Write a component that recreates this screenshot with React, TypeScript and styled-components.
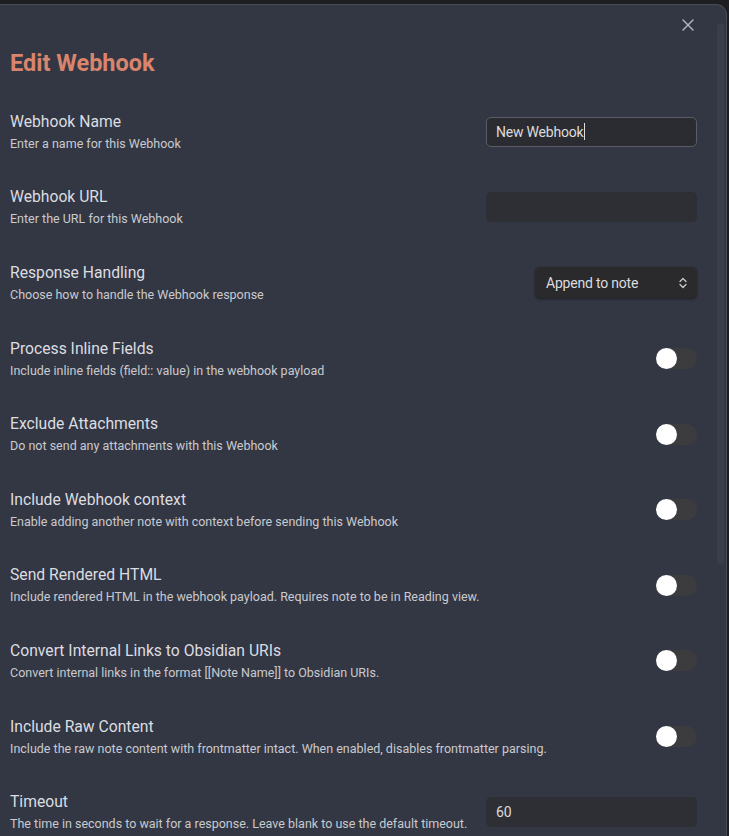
import React from "react";
import styled, { createGlobalStyle } from "styled-components";

const GlobalStyle = createGlobalStyle`
  html, body {
    margin: 0;
    padding: 0;
    background-color: #1d1e22;
    overflow: hidden;
  }
  body {
    font-family: Roboto, "Liberation Sans", sans-serif;
  }
`;

const Page = styled.div`
  height: 836px;
  padding-top: 4px;
  box-sizing: border-box;
  overflow: hidden;
`;

const Modal = styled.div`
  position: relative;
  width: 727px;
  height: 100%;
  overflow: hidden;
  box-sizing: border-box;
  background-color: #333743;
  border-top: 1px solid #474a54;
  border-right: 1px solid #474a54;
  border-top-right-radius: 11px;
  padding: 0 29px 0 10px;
`;

const Scrollbar = styled.div`
  position: absolute;
  top: 18px;
  right: 2px;
  width: 7px;
  height: 542px;
  border-radius: 4px;
  background-color: #3b3e49;
`;

const Header = styled.div`
  height: 89px;
  display: flex;
  flex-direction: column;
`;

const CloseRow = styled.div`
  display: flex;
  justify-content: flex-end;
  padding-top: 13px;
  margin-right: 2px;
`;

const CloseButton = styled.button`
  width: 14px;
  height: 14px;
  padding: 0;
  border: none;
  background: none;
  color: #b9bac0;
  display: flex;
  align-items: center;
  justify-content: center;
`;

const Title = styled.h1`
  margin: 17px 0 0;
  font-size: 23.5px;
  font-weight: 700;
  color: #d9846c;
`;

const Row = styled.div`
  height: 75.6px;
  display: flex;
  align-items: center;
  justify-content: space-between;
  gap: 16px;
`;

const Info = styled.div`
  display: flex;
  flex-direction: column;
  gap: 4px;
`;

const Name = styled.div`
  font-size: 15.7px;
  line-height: 20px;
  color: #dcdde1;
`;

const Description = styled.div`
  font-size: 12.5px;
  line-height: 16px;
  color: #c9cacf;
`;

const TextInput = styled.div<{ $focused?: boolean }>`
  width: 211px;
  height: 30px;
  box-sizing: border-box;
  flex-shrink: 0;
  display: flex;
  align-items: center;
  padding: 0 9px;
  border-radius: 5px;
  background-color: ${(p) => (p.$focused ? "#2b2c31" : "#2e2f34")};
  border: 1px solid ${(p) => (p.$focused ? "#5b5d66" : "transparent")};
  font-size: 14px;
  letter-spacing: -0.2px;
  color: #dcdcdf;
`;

const Caret = styled.span`
  display: inline-block;
  width: 1px;
  height: 17px;
  background-color: #dcdcdf;
  margin-left: 1px;
`;

const Select = styled.div`
  width: 162px;
  height: 31px;
  box-sizing: border-box;
  flex-shrink: 0;
  display: flex;
  align-items: center;
  justify-content: space-between;
  padding: 0 9px 0 11px;
  border-radius: 5px;
  background-color: #2a2a2d;
  box-shadow: 0 1px 3px rgba(0, 0, 0, 0.45);
  font-size: 14px;
  letter-spacing: -0.2px;
  color: #dcdcdf;
`;

const Toggle = styled.div<{ $on?: boolean }>`
  width: 41px;
  height: 21px;
  flex-shrink: 0;
  border-radius: 11px;
  background-color: ${(p) => (p.$on ? "#d9846c" : "#3c3c3f")};
  display: flex;
  align-items: center;
  justify-content: ${(p) => (p.$on ? "flex-end" : "flex-start")};
`;

const Knob = styled.div`
  width: 21px;
  height: 21px;
  border-radius: 50%;
  background-color: #ffffff;
`;

type Setting = {
  name: string;
  desc: string;
  control: "name" | "url" | "select" | "toggle" | "timeout";
};

const settings: Setting[] = [
  { name: "Webhook Name", desc: "Enter a name for this Webhook", control: "name" },
  { name: "Webhook URL", desc: "Enter the URL for this Webhook", control: "url" },
  { name: "Response Handling", desc: "Choose how to handle the Webhook response", control: "select" },
  { name: "Process Inline Fields", desc: "Include inline fields (field:: value) in the webhook payload", control: "toggle" },
  { name: "Exclude Attachments", desc: "Do not send any attachments with this Webhook", control: "toggle" },
  { name: "Include Webhook context", desc: "Enable adding another note with context before sending this Webhook", control: "toggle" },
  { name: "Send Rendered HTML", desc: "Include rendered HTML in the webhook payload. Requires note to be in Reading view.", control: "toggle" },
  { name: "Convert Internal Links to Obsidian URIs", desc: "Convert internal links in the format [[Note Name]] to Obsidian URIs.", control: "toggle" },
  { name: "Include Raw Content", desc: "Include the raw note content with frontmatter intact. When enabled, disables frontmatter parsing.", control: "toggle" },
  { name: "Timeout", desc: "The time in seconds to wait for a response. Leave blank to use the default timeout.", control: "timeout" },
];

function Control({ kind }: { kind: Setting["control"] }) {
  switch (kind) {
    case "name":
      return (
        <TextInput $focused>
          New Webhook
          <Caret />
        </TextInput>
      );
    case "url":
      return <TextInput />;
    case "timeout":
      return <TextInput>60</TextInput>;
    case "select":
      return (
        <Select>
          Append to note
          <svg width="10" height="12" viewBox="0 0 10 12" fill="none" stroke="#c9cacf" strokeWidth="1.3" strokeLinecap="round" strokeLinejoin="round">
            <path d="M2 4.5 5 1.5 8 4.5" />
            <path d="M2 7.5 5 10.5 8 7.5" />
          </svg>
        </Select>
      );
    default:
      return (
        <Toggle>
          <Knob />
        </Toggle>
      );
  }
}

export default function App() {
  return (
    <>
      <GlobalStyle />
      <Page>
        <Modal>
          <Scrollbar />
          <Header>
            <CloseRow>
              <CloseButton aria-label="Close">
                <svg width="12" height="12" viewBox="0 0 12 12" stroke="currentColor" strokeWidth="1.4" strokeLinecap="round">
                  <path d="M1 1 11 11M11 1 1 11" />
                </svg>
              </CloseButton>
            </CloseRow>
            <Title>Edit Webhook</Title>
          </Header>
          {settings.map((s) => (
            <Row key={s.name}>
              <Info>
                <Name>{s.name}</Name>
                <Description>{s.desc}</Description>
              </Info>
              <Control kind={s.control} />
            </Row>
          ))}
        </Modal>
      </Page>
    </>
  );
}
